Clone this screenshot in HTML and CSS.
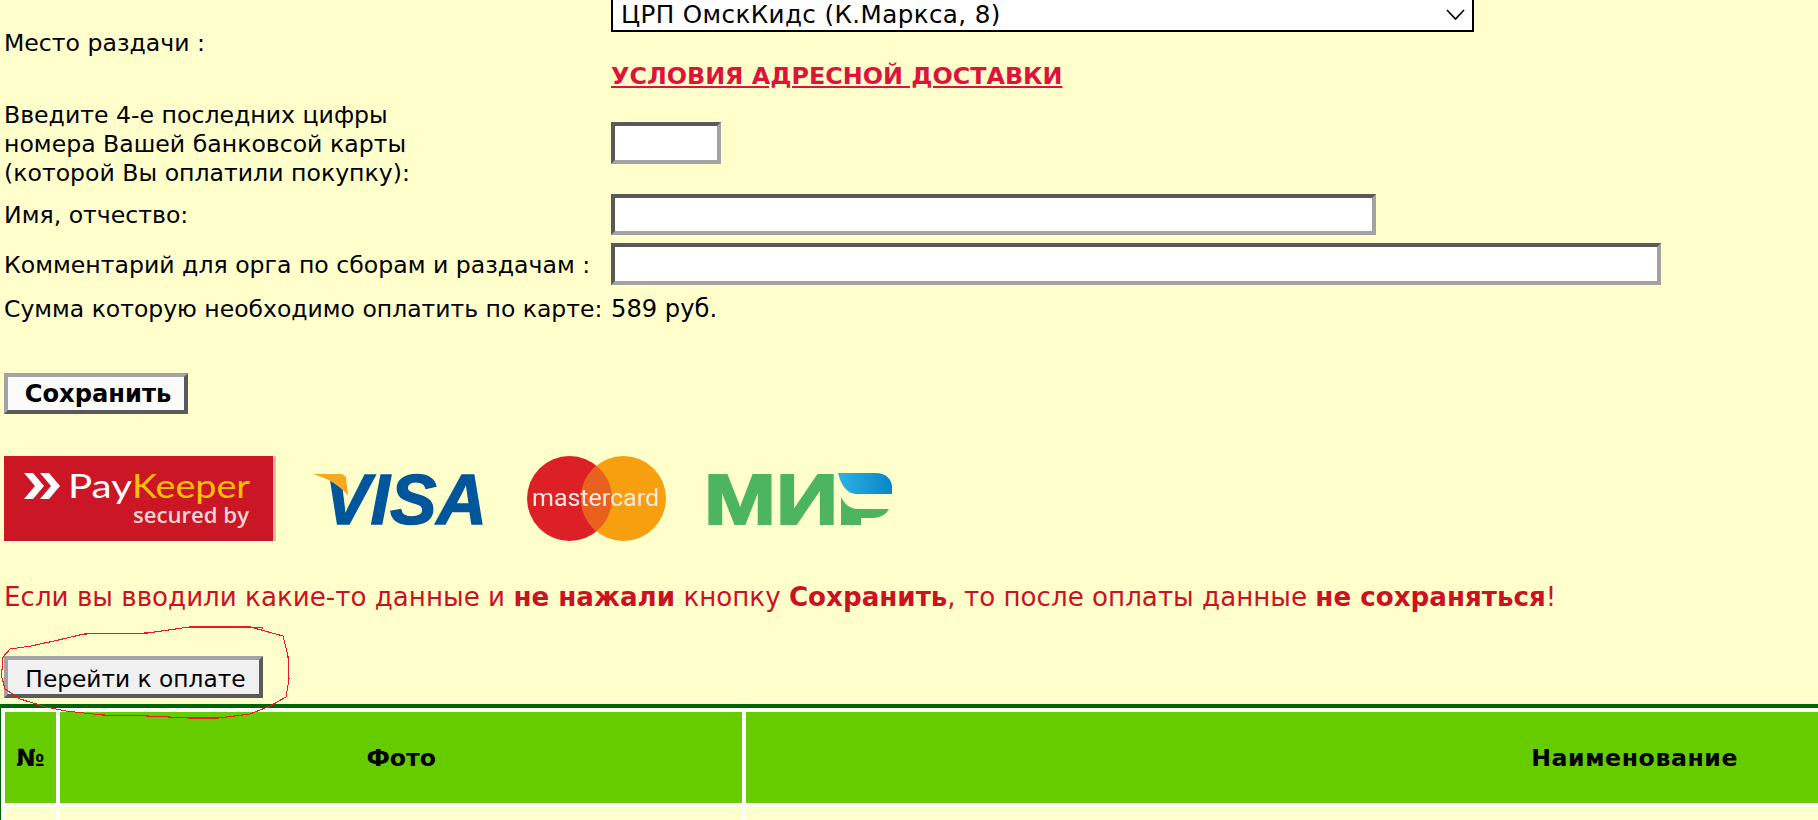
FILE: index.html
```html
<!DOCTYPE html>
<html lang="ru">
<head>
<meta charset="utf-8">
<title>Оплата</title>
<link rel="stylesheet" href="styles.css">
</head>
<body>
<div class="page">
  <form class="form-grid">
    <div class="label">Место раздачи :</div>
    <div class="place">
      <div class="select-wrap">
        <select class="select"><option>ЦРП ОмскКидс (К.Маркса, 8)</option></select>
        <svg class="chevron" viewBox="0 0 19 11" width="19" height="11"><path d="M1 1l8.5 9L18 1" fill="none" stroke="#000" stroke-width="1.7"/></svg>
      </div>
      <a class="delivery" href="#">УСЛОВИЯ АДРЕСНОЙ ДОСТАВКИ</a>
    </div>
    <div class="label">Введите 4-е последних цифры<br>номера Вашей банковсой карты<br>(которой Вы оплатили покупку):</div>
    <div><input class="field field-card" type="text"></div>
    <div class="label">Имя, отчество:</div>
    <div><input class="field field-name" type="text"></div>
    <div class="label">Комментарий для орга по сборам и раздачам :</div>
    <div><input class="field field-comment" type="text"></div>
    <div class="label label-sum">Сумма которую необходимо оплатить по карте:</div>
    <div class="label label-value">589 руб.</div>
  </form>

  <button class="btn btn-save" type="button">Сохранить</button>

  <div class="logos">
    <svg class="logo logo-pay" viewBox="0 0 272 85" width="272" height="85">
      <rect width="272" height="85" fill="#cb1626"/>
      <rect x="269" width="3" height="85" fill="#edb4a0"/>
      <path d="M20 17h9l11 13-11 13h-9l11-13zM36 17h9l11 13-11 13h-9l11-13z" fill="#fff"/>
      <text class="pay-word" x="64" y="42" textLength="64" lengthAdjust="spacingAndGlyphs">Pay</text>
      <text class="pay-word pay-gold" x="128" y="42" textLength="118" lengthAdjust="spacingAndGlyphs">Keeper</text>
      <text class="pay-sub" x="129" y="67" textLength="116" lengthAdjust="spacingAndGlyphs">secured by</text>
    </svg>
    <svg class="logo logo-visa" viewBox="0 0 172 52" width="172" height="52">
      <text class="visa-word" x="11" y="51" textLength="163" lengthAdjust="spacingAndGlyphs">VISA</text>
      <path d="M0 1h29l4 3 2 19C28 13 14 5 0 1z" fill="#f7a823"/>
    </svg>
    <svg class="logo logo-mc" viewBox="0 0 139 85" width="139" height="85">
      <circle cx="42.5" cy="42.5" r="42.5" fill="#dd1f26"/>
      <circle cx="96.5" cy="42.5" r="42.5" fill="#f6a00f"/>
      <path d="M69.5 9.7a42.5 42.5 0 0 1 0 65.6a42.5 42.5 0 0 1 0-65.6z" fill="#e9601f"/>
      <text class="mc-word" x="5" y="50" textLength="127" lengthAdjust="spacingAndGlyphs">mastercard</text>
    </svg>
    <svg class="logo logo-mir" viewBox="0 0 184 52" width="184" height="52">
      <defs>
        <linearGradient id="mirBlue" x1="0" x2="1" y1="0" y2="0">
          <stop offset="0" stop-color="#2db2e6"/>
          <stop offset="1" stop-color="#0786c6"/>
        </linearGradient>
      </defs>
      <text class="mir-word" x="-4" y="51" textLength="134" lengthAdjust="spacingAndGlyphs">МИ</text>
      <path d="M130 0h38c9 0 16 6 16 14v7h-36c-9 0-15-9-18-21z" fill="url(#mirBlue)"/>
      <path d="M133 24c4 8 9 11 15 12h33c-3 6-10 9-16 9h-12v7h-20z" fill="#4db45f"/>
    </svg>
  </div>

  <p class="warning">Если вы вводили какие-то данные и <b>не нажали</b> кнопку <b>Сохранить</b>, то после оплаты данные <b>не сохраняться</b>!</p>

  <div class="pay-wrap">
    <button class="btn btn-pay" type="button">Перейти к оплате</button>
    <svg class="scribble" viewBox="0 627 292 94" width="292" height="94">
      <path d="M263 629 250 628H219L189 628 148 634 84 635 54 642 31 647 10 650 3 658 1.5 677 5 690 20 700 46 708 66 712 102 716 148 717 189 719 219 719 250 715 270 707 286 698 289 680 288 657 283 637 265 632 250 628" fill="none" stroke="#f01828" stroke-width="1.1"/>
    </svg>
  </div>

  <table class="goods">
    <colgroup><col class="col-num"><col class="col-photo"><col class="col-name"></colgroup>
    <thead>
      <tr><th>№</th><th>Фото</th><th class="th-name">Наименование</th></tr>
    </thead>
    <tbody>
      <tr><td></td><td></td><td></td></tr>
    </tbody>
  </table>
</div>
</body>
</html>
```
FILE: styles.css
```css
html, body {
  margin: 0;
  padding: 0;
  background: #ffffcc;
}
body {
  font-family: "DejaVu Sans", Verdana, sans-serif;
  font-size: 23.6px;
  line-height: 29px;
  color: #000;
}
.page {
  height: 820px;
  overflow: hidden;
}
.form-grid {
  display: grid;
  grid-template-columns: 607px 1fr;
  grid-template-rows: 100px 86px 41px 42px 30px;
  row-gap: 8px;
  align-items: center;
  margin: -8px 0 0 4px;
}
.label {
  white-space: nowrap;
  padding-top: 2px;
}
.label-sum { font-size: 23.5px; }
.label-value { font-size: 24.2px; }
.place {
  display: flex;
  flex-direction: column;
  align-items: flex-start;
  align-self: start;
}
.select-wrap {
  position: relative;
}
.select {
  display: block;
  appearance: none;
  width: 863px;
  height: 40px;
  border: 2px solid #000;
  border-radius: 0;
  background: #fff;
  font: inherit;
  font-size: 24.6px;
  letter-spacing: 0.4px;
  color: #000;
  padding: 4px 0 0 8px;
}
.chevron {
  position: absolute;
  right: 9px;
  top: 17px;
  pointer-events: none;
}
.delivery {
  margin-top: 30px;
  font-weight: bold;
  font-size: 23.85px;
  color: #dc143c;
}
.field {
  display: block;
  box-sizing: border-box;
  border: 4px solid;
  border-color: #5a5a5a #a3a3a3 #a3a3a3 #5a5a5a;
  background: #fff;
  padding: 0;
  margin: 0;
  font: inherit;
}
.field-card { width: 110px; height: 42px; }
.field-name { width: 765px; height: 41px; }
.field-comment { width: 1050px; height: 42px; }
.btn {
  display: block;
  box-sizing: border-box;
  border: 4px solid;
  border-color: #a3a3a3 #5a5a5a #5a5a5a #a3a3a3;
  color: #000;
  font: inherit;
  padding: 2px 0 0 4px;
  margin: 0 0 0 4px;
}
.btn-save {
  width: 184px;
  height: 41px;
  margin-top: 50px;
  background: #fbfbfb;
  font-weight: bold;
  font-size: 24.2px;
}
.btn-pay {
  width: 259px;
  height: 42px;
  background: #f0f0f0;
  font-size: 23.3px;
}
.logos {
  display: flex;
  margin: 42px 0 0 4px;
  height: 85px;
  align-items: center;
  filter: blur(0.6px);
}
.logo { overflow: visible; }
.logo-visa { margin-left: 37px; }
.logo-mc { margin-left: 42px; }
.logo-mir { margin-left: 42px; }
.pay-word {
  font-family: "Lato", sans-serif;
  font-size: 33px;
  fill: #fff;
}
.pay-gold { fill: #ffc000; }
.pay-sub {
  font-family: "Open Sans", sans-serif;
  font-size: 21px;
  font-weight: 600;
  fill: #f7d5d5;
}
.visa-word {
  font-family: "Liberation Sans", sans-serif;
  font-weight: bold;
  font-style: italic;
  font-size: 71px;
  fill: #00559b;
  stroke: #00559b;
  stroke-width: 1.4px;
}
.mc-word {
  font-family: "Roboto", sans-serif;
  font-size: 23px;
  fill: #fde9e0;
}
.mir-word {
  font-family: "Liberation Sans", sans-serif;
  font-weight: bold;
  font-size: 70px;
  fill: #4db45f;
  stroke: #4db45f;
  stroke-width: 2.2px;
}
.warning {
  margin: 42px 0 0 4px;
  color: #cc1122;
  font-size: 26.15px;
}
.pay-wrap {
  position: relative;
  margin-top: 44px;
}
.scribble {
  position: absolute;
  left: 0;
  top: -30px;
  z-index: 2;
  pointer-events: none;
  shape-rendering: crispEdges;
}
.goods {
  table-layout: fixed;
  width: 2530px;
  margin: 6px 0 0 -1px;
  border-collapse: separate;
  border-spacing: 4px;
  border: solid #006400;
  border-width: 4px 2px 0;
  background: #fff;
}
.goods th {
  box-sizing: border-box;
  height: 91px;
  padding: 2px 0 0;
  background: #66cc00;
  font-weight: bold;
}
.goods .th-name { letter-spacing: 0.6px; }
.goods td {
  height: 60px;
  padding: 0;
  background: #ffffcc;
}
.col-num { width: 51px; }
.col-photo { width: 682px; }
.col-name { width: 1776px; }
```
